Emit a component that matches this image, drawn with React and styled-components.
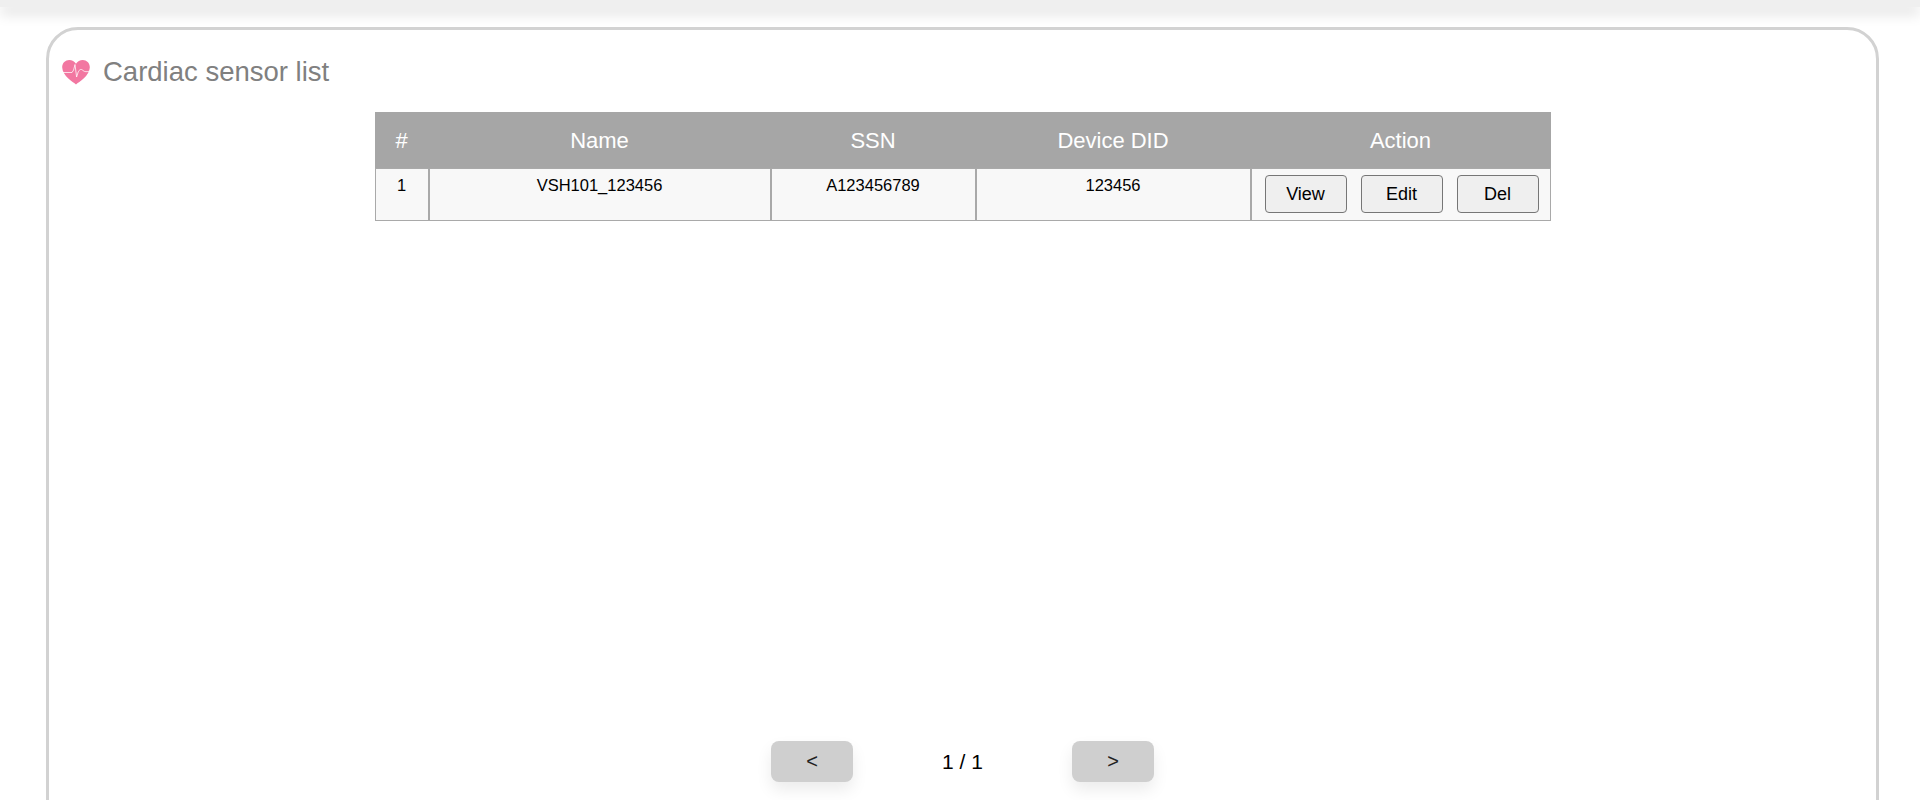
import styled, { createGlobalStyle } from "styled-components";

const GlobalStyle = createGlobalStyle`
  html, body {
    margin: 0;
    padding: 0;
    height: 800px;
    overflow: hidden;
    background: #fff;
    font-family: "Liberation Sans", Arial, sans-serif;
  }
`;

function HeartIcon() {
  return (
    <svg width="30" height="26" viewBox="0 0 30 26">
      <path
        fill="#f277a1"
        d="M15 25.5 C12 23 1.5 17 1.2 8.6 C1 3.8 4.6 1 8.2 1 C11 1 13.6 2.4 15 4.8 C16.4 2.4 19 1 21.8 1 C25.4 1 29 3.8 28.8 8.6 C28.5 17 18 23 15 25.5 Z"
      />
      <path
        fill="none"
        stroke="#fff"
        strokeOpacity="0.75"
        strokeWidth="1"
        d="M1.5 13.5 H11 L12.6 11 L14 5.5 L15.6 18 L17.2 13 C18.5 10.5 20 9.5 22 11.5 C23.5 13 26 13 29 12"
      />
    </svg>
  );
}

const rows = [{ id: 1, name: "VSH101_123456", ssn: "A123456789", did: "123456" }];

function App() {
  return (
    <>
      <GlobalStyle />
      <TopBar />
      <Panel>
        <Title>
          <HeartIcon />
          <span>Cardiac sensor list</span>
        </Title>
        <ListArea>
          <SensorTable>
            <colgroup>
              <col width="54" />
              <col width="342" />
              <col width="205" />
              <col width="275" />
              <col width="300" />
            </colgroup>
            <thead>
              <tr>
                <th>#</th>
                <th>Name</th>
                <th>SSN</th>
                <th>Device DID</th>
                <th>Action</th>
              </tr>
            </thead>
            <tbody>
              {rows.map((row) => (
                <tr key={row.id}>
                  <td>{row.id}</td>
                  <td>{row.name}</td>
                  <td>{row.ssn}</td>
                  <td>{row.did}</td>
                  <td>
                    <Actions>
                      <ActionButton>View</ActionButton>
                      <ActionButton>Edit</ActionButton>
                      <ActionButton>Del</ActionButton>
                    </Actions>
                  </td>
                </tr>
              ))}
            </tbody>
          </SensorTable>
        </ListArea>
        <Pager>
          <PageButton>&lt;</PageButton>
          <PageText>1 / 1</PageText>
          <PageButton>&gt;</PageButton>
        </Pager>
      </Panel>
    </>
  );
}

export default App;

const TopBar = styled.div`
  height: 7px;
  background: #efefef;
  box-shadow: 0 6px 14px rgba(0, 0, 0, 0.17);
`;

const Panel = styled.div`
  box-sizing: border-box;
  width: 1833px;
  height: 900px;
  margin: 20px 0 0 46px;
  border: 3px solid #d2d2d2;
  border-radius: 32px;
  background: #fff;
`;

const Title = styled.div`
  display: flex;
  align-items: center;
  gap: 12px;
  height: 32px;
  margin: 26px 0 0 12px;
  font-size: 27.5px;
  color: #808080;
`;

const ListArea = styled.div`
  display: flex;
  justify-content: center;
  height: 629px;
  padding-top: 24px;
`;

const SensorTable = styled.table`
  align-self: flex-start;
  width: 1176px;
  table-layout: fixed;
  border-collapse: separate;
  border-spacing: 0;

  th {
    height: 52px;
    padding: 2px 0 0;
    background: #a6a6a6;
    border: 1px solid #a6a6a6;
    font-size: 22px;
    font-weight: 400;
    color: #fff;
  }

  td {
    height: 53px;
    padding: 6px 0 0;
    box-sizing: border-box;
    background: #f8f8f8;
    border: 1px solid #a9a9a9;
    font-size: 16.5px;
    line-height: 20px;
    color: #000;
    text-align: center;
    vertical-align: top;
  }
`;

const Actions = styled.div`
  display: flex;
  justify-content: center;
  gap: 14px;
  margin-left: 2px;
`;

const ActionButton = styled.button`
  width: 82px;
  height: 38px;
  padding: 0;
  border: 1px solid #767676;
  border-radius: 4px;
  background: #efefef;
  font-family: inherit;
  font-size: 18px;
  color: #000;
`;

const Pager = styled.div`
  display: flex;
  justify-content: center;
  align-items: center;
`;

const PageButton = styled.button`
  width: 82px;
  height: 41px;
  padding: 0;
  border: 0;
  border-radius: 8px;
  background: #cfcfcf;
  box-shadow: 0 8px 16px rgba(0, 0, 0, 0.08);
  font-family: inherit;
  font-size: 20px;
  color: #222;
`;

const PageText = styled.div`
  width: 219px;
  text-align: center;
  font-size: 21px;
  color: #000;
`;
